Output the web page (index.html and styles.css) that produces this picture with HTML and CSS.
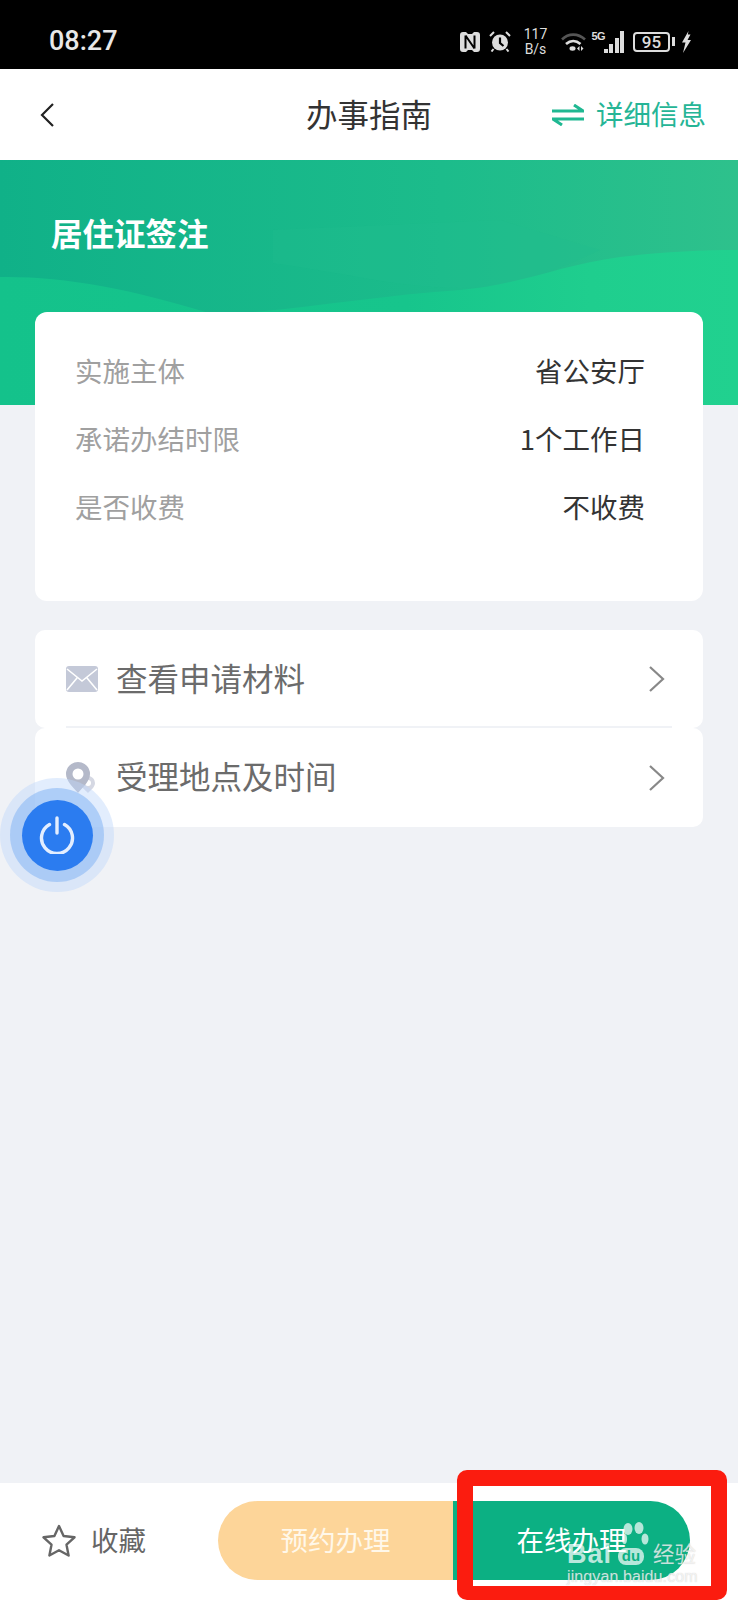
FILE: index.html
```html
<!DOCTYPE html>
<html lang="zh-CN">
<head>
  <meta charset="UTF-8" />
  <meta name="viewport" content="width=device-width, initial-scale=1.0"/>
  <title>办事指南</title>
  <link rel="stylesheet" href="styles.css">
</head>
<body>
  <div class="page">
    <div class="status-bar">
      <span class="time">08:27</span>
      <div class="status-icons">
        <svg class="ic-nfc" width="20" height="20" viewBox="0 0 20 20">
          <path d="M3 0h3l2 2h4l2-2h3a3 3 0 0 1 3 3v14a3 3 0 0 1-3 3h-3l-2-2H8l-2 2H3a3 3 0 0 1-3-3V3a3 3 0 0 1 3-3z" fill="#ddd"/>
          <path d="M5.500 3.500v13M5.500 3.500l9 13M14.500 3.500v13" fill="none" stroke="#000" stroke-width="2"/>
        </svg>
        <svg class="ic-alarm" width="22" height="21" viewBox="0 0 22 21">
          <circle cx="11" cy="11.500" r="8" fill="#ddd"/>
          <path d="M11 6.500v5.500l3.500 3" fill="none" stroke="#000" stroke-width="2.200"/>
          <path d="M1 5l4-4M21 5l-4-4M4.500 18l-2 2.500M17.500 18l2 2.500" fill="none" stroke="#ddd" stroke-width="2"/>
        </svg>
        <div class="net-speed"><span>117</span><span>B/s</span></div>
        <svg class="ic-wifi" width="25" height="20" viewBox="0 0 25 20">
          <path d="M1 7.500C7.500 1 17 1 24 7.500" fill="none" stroke="#555" stroke-width="2.600"/>
          <path d="M5 12c4.500-4 10-4 14.500 0" fill="none" stroke="#ddd" stroke-width="2.600"/>
          <ellipse cx="11.500" cy="16.500" rx="3" ry="2.200" fill="#ddd"/>
          <path d="M18.500 14v5l-2.500-2.500zM20 14v5l2.500-2.500z" fill="#ddd"/>
        </svg>
        <span class="net-type">5G</span>
        <div class="signal"><i class="s1"></i><i class="s2"></i><i class="s3"></i><i class="s4"></i></div>
        <div class="battery"><span>95</span></div>
        <i class="battery-nub"></i>
        <svg class="ic-bolt" width="11" height="22" viewBox="0 0 11 22">
          <path d="M7.500 0L1 11.500h3.500L2 22l8-13H6.500l3-5.500H6.800z" fill="#ddd"/>
        </svg>
      </div>
    </div>

    <div class="nav-bar">
      <svg class="nav-back" width="14" height="24" viewBox="0 0 14 24">
        <path d="M13 1L2 12l11 11" fill="none" stroke="#222" stroke-width="2.200"/>
      </svg>
      <h1 class="nav-title">办事指南</h1>
      <div class="nav-action">
        <svg width="32" height="22" viewBox="0 0 32 22">
          <path d="M0 7h31L22 1M32 15H1l9 6" fill="none" stroke="#1fb892" stroke-width="3"/>
        </svg>
        <span>详细信息</span>
      </div>
    </div>

    <div class="content">
      <div class="hero">
        <svg class="hero-wave" width="738" height="245" viewBox="0 0 738 245">
          <defs>
            <linearGradient id="waveFill" x1="0" y1="0" x2="1" y2="0">
              <stop offset="0" stop-color="#14c28b"/>
              <stop offset="0.55" stop-color="#17c58c"/>
              <stop offset="0.8" stop-color="#1fce8e"/>
              <stop offset="1" stop-color="#21d18f"/>
            </linearGradient>
          </defs>
          <path d="M273 103C340 112 400 128 460 128C520 128 560 108 600 90L500 60L273 70Z" fill="#22bd8d" opacity="0.3"/>
          <path d="M0 117C60 116 130 128 215 155C300 150 380 135 460 130C520 125 560 105 620 97C660 92 700 90 738 90V245H0Z" fill="url(#waveFill)"/>
        </svg>
        <h2 class="hero-title">居住证签注</h2>
      </div>

      <div class="info-card">
        <div class="info-row"><span class="info-label">实施主体</span><span class="info-value">省公安厅</span></div>
        <div class="info-row"><span class="info-label">承诺办结时限</span><span class="info-value">1个工作日</span></div>
        <div class="info-row"><span class="info-label">是否收费</span><span class="info-value">不收费</span></div>
      </div>

      <div class="menu-card">
        <div class="menu-item menu-item-first">
          <svg class="menu-icon" width="32" height="26" viewBox="0 0 32 26">
            <rect width="32" height="26" rx="3" fill="#c4c9d8"/>
            <path d="M1 3l15 12L31 3M1 24l10-12M31 24L21 12" fill="none" stroke="#fff" stroke-width="1.600"/>
          </svg>
          <span class="menu-text">查看申请材料</span>
          <svg class="menu-arrow" width="17" height="26" viewBox="0 0 17 26">
            <path d="M2 1l13 12L2 25" fill="none" stroke="#888" stroke-width="2.200"/>
          </svg>
        </div>
      </div>
      <div class="menu-card">
        <div class="menu-item menu-item-last">
          <svg class="menu-icon" width="32" height="31" viewBox="0 0 32 31">
            <path d="M22 14a7 7 0 0 1 7 7c0 4-4 7-7 10-3-3-7-6-7-10a7 7 0 0 1 7-7z" fill="#d5d8e3"/>
            <circle cx="22" cy="21" r="3" fill="#fff"/>
            <path d="M12 0a12 12 0 0 1 12 12c0 7-7 13-12 19C7 25 0 19 0 12A12 12 0 0 1 12 0z" fill="#b4b9c9"/>
            <circle cx="12" cy="12" r="5.500" fill="#fff"/>
          </svg>
          <span class="menu-text">受理地点及时间</span>
          <svg class="menu-arrow" width="17" height="26" viewBox="0 0 17 26">
            <path d="M2 1l13 12L2 25" fill="none" stroke="#888" stroke-width="2.200"/>
          </svg>
        </div>
      </div>
    </div>

    <div class="bottom-bar">
      <div class="favorite">
        <svg width="34" height="33" viewBox="0 0 34 33">
          <path d="M17 2l4.600 10 10.900 1.300-8 7.400 2.100 10.800L17 26.200 7.400 31.500l2.100-10.800-8-7.400L12.400 12z" fill="none" stroke="#666" stroke-width="2.400" stroke-linejoin="round"/>
        </svg>
        <span>收藏</span>
      </div>
      <div class="action-pill">
        <div class="btn-reserve">预约办理</div>
        <div class="btn-online">在线办理</div>
      </div>
    </div>

    <!-- 悬浮按钮 -->
    <div class="float-btn">
      <div class="float-mid">
        <div class="float-core">
          <svg width="38" height="38" viewBox="0 0 38 38">
            <path d="M11.500 8.500a15.500 15.500 0 1 0 15 0" fill="none" stroke="#e3eeff" stroke-width="3.400" stroke-linecap="round"/>
            <path d="M19 2v15" fill="none" stroke="#e3eeff" stroke-width="3.400" stroke-linecap="round"/>
          </svg>
        </div>
      </div>
    </div>

    <!-- 标注框 + 水印 -->
    <div class="red-box"></div>
    <div class="watermark">
      <svg class="wm-paw" width="30" height="28" viewBox="0 0 30 28">
        <ellipse cx="6" cy="7" rx="4.500" ry="6" fill="#fff"/>
        <ellipse cx="17" cy="6" rx="4.500" ry="6" fill="#fff"/>
        <ellipse cx="2.500" cy="17" rx="2.500" ry="5" fill="#fff"/>
        <ellipse cx="23" cy="17" rx="3.500" ry="5.500" fill="#fff"/>
      </svg>
      <div class="wm-brand"><span class="wm-bai">Bai</span><span class="wm-du">du</span><span class="wm-cn">经验</span></div>
      <div class="wm-url">jingyan.baidu.com</div>
    </div>
  </div>
</body>
</html>
```

FILE: styles.css
```css
* {
    box-sizing: border-box;
}
body {
    margin: 0;
    font-family: "Noto Sans CJK SC", "Noto Sans", sans-serif;
    background-color: #f0f2f6;
}
.page {
    position: relative;
    width: 738px;
    height: 1600px;
    overflow: hidden;
    display: flex;
    flex-direction: column;
}

/* status bar */
.status-bar {
    height: 69px;
    background-color: #000;
    color: #ddd;
    display: flex;
    align-items: center;
    justify-content: space-between;
    padding: 14px 46px 0 49px;
    flex-shrink: 0;
}
.time {
    font-family: Roboto, sans-serif;
    font-size: 27px;
    font-weight: 500;
    color: #e8e8e8;
    transform: translateY(-1px);
}
.status-icons {
    display: flex;
    align-items: center;
}
.ic-alarm {
    margin-left: 9px;
}
.net-speed {
    margin-left: 13px;
    width: 24px;
    display: flex;
    flex-direction: column;
    align-items: center;
    font-family: Roboto, sans-serif;
    font-size: 14px;
    line-height: 15px;
}
.ic-wifi {
    margin-left: 13px;
}
.net-type {
    margin: -12px 0 0 6px;
    width: 12px;
    font-family: "Liberation Sans", sans-serif;
    font-size: 11px;
    font-weight: bold;
    line-height: 10px;
    letter-spacing: -0.5px;
}
.signal {
    display: flex;
    align-items: flex-end;
    gap: 1.500px;
    height: 22px;
}
.signal i {
    display: block;
    width: 4px;
    background-color: #ddd;
}
.signal .s1 { height: 4px; }
.signal .s2 { height: 9px; }
.signal .s3 { height: 15px; }
.signal .s4 { height: 22px; }
.battery {
    margin-left: 9px;
    width: 37px;
    height: 20px;
    border: 2px solid #ddd;
    border-radius: 4px;
    display: flex;
    align-items: center;
    justify-content: center;
    font-family: Roboto, sans-serif;
    font-size: 17px;
    font-weight: 500;
}
.battery-nub {
    display: block;
    margin-left: 2px;
    width: 3px;
    height: 9px;
    background-color: #ddd;
}
.ic-bolt {
    margin-left: 6px;
}

/* nav */
.nav-bar {
    position: relative;
    height: 91px;
    background-color: #fff;
    display: flex;
    align-items: center;
    justify-content: space-between;
    padding: 0 32px 0 40px;
    flex-shrink: 0;
}
.nav-title {
    position: absolute;
    left: 306px;
    margin: 0 0 4px;
    font-size: 31.500px;
    font-weight: 400;
    color: #333;
}
.nav-action {
    display: flex;
    align-items: center;
    gap: 12px;
    font-size: 27.500px;
    color: #25b596;
}
.nav-action span {
    margin-bottom: 3px;
}

/* hero + cards */
.content {
    flex: 1;
}
.hero {
    position: relative;
    height: 245px;
    background: linear-gradient(90deg, #10b188 0%, #1cbc8b 60%, #2ec18c 100%);
    overflow: hidden;
}
.hero-wave {
    position: absolute;
    left: 0;
    top: 0;
}
.hero-title {
    position: relative;
    margin: 0;
    padding: 49px 0 0 51px;
    font-size: 31.500px;
    line-height: 46px;
    font-weight: 700;
    color: #fff;
}
.info-card {
    position: relative;
    margin: -93px 35px 0 35px;
    height: 289px;
    padding: 23.500px 58px 0 40px;
    background-color: #fff;
    border-radius: 12px;
}
.info-row {
    height: 68px;
    display: flex;
    align-items: center;
    justify-content: space-between;
    font-size: 27.500px;
}
.info-label {
    color: #a0a0a0;
}
.info-value {
    color: #333;
}
.menu-card {
    margin: 0 35px;
    background-color: #fff;
    border-radius: 10px;
}
.info-card + .menu-card {
    margin-top: 29px;
}
.menu-item {
    height: 98px;
    display: flex;
    align-items: center;
    padding: 0 38px 0 31px;
}
.menu-item-last {
    height: 99px;
}
.menu-icon {
    flex-shrink: 0;
}
.menu-text {
    flex: 1;
    margin: 0 0 5px 18px;
    font-size: 31.500px;
    color: #6b6b6b;
}
.menu-item-first {
    background: linear-gradient(#f0f2f6, #f0f2f6) no-repeat 31px 96px / 606px 2px;
}
.menu-arrow {
    flex-shrink: 0;
}

/* bottom */
.bottom-bar {
    height: 117px;
    background-color: #fff;
    display: flex;
    align-items: center;
    padding: 0 48px 3px 42px;
    flex-shrink: 0;
    justify-content: space-between;
}
.favorite {
    display: flex;
    align-items: center;
    gap: 15px;
    font-size: 27.500px;
    color: #666;
}
.favorite span {
    margin-bottom: 2px;
}
.action-pill {
    display: flex;
    width: 472px;
    height: 79px;
    font-size: 27.500px;
    color: #fff;
    text-align: center;
    line-height: 77px;
}
.btn-reserve {
    width: 235px;
    background-color: #fdd599;
    color: #fff8ea;
    border-radius: 40px 0 0 40px;
}
.btn-online {
    flex: 1;
    background-color: #0cb083;
    border-radius: 0 40px 40px 0;
}

/* overlays */
.float-btn {
    position: absolute;
    left: 0;
    top: 778px;
    width: 114px;
    height: 114px;
    border-radius: 50%;
    background-color: rgba(190, 215, 250, 0.45);
    display: flex;
    align-items: center;
    justify-content: center;
}
.float-mid {
    width: 94px;
    height: 94px;
    border-radius: 50%;
    background-color: rgba(140, 185, 245, 0.6);
    display: flex;
    align-items: center;
    justify-content: center;
}
.float-core {
    width: 71px;
    height: 71px;
    border-radius: 50%;
    background-color: #2b7cf0;
    display: flex;
    align-items: center;
    justify-content: center;
}
.red-box {
    position: absolute;
    left: 457px;
    top: 1470px;
    width: 270px;
    height: 130px;
    border: 16px solid #fb1c0f;
    border-bottom-width: 14px;
    border-radius: 10px;
}
.watermark {
    position: absolute;
    left: 566px;
    top: 1522px;
    width: 134px;
    height: 62px;
    color: rgba(255, 255, 255, 0.72);
    font-family: "Liberation Sans", sans-serif;
}
.wm-paw {
    position: absolute;
    left: 56px;
    top: 0;
    opacity: 0.7;
}
.wm-brand {
    position: absolute;
    left: 1px;
    top: 18px;
    display: flex;
    align-items: flex-end;
    font-size: 27px;
    font-weight: 700;
    line-height: 28px;
    white-space: nowrap;
}
.wm-bai {
    letter-spacing: 1px;
}
.wm-du {
    margin: 0 0 3px 6px;
    width: 26px;
    height: 17px;
    background-color: rgba(255, 255, 255, 0.7);
    color: #0cb083;
    border-radius: 8px;
    text-align: center;
    font-size: 15px;
    line-height: 16px;
}
.wm-cn {
    position: absolute;
    left: 86px;
    top: 0;
    font-family: "Noto Sans CJK SC", sans-serif;
    font-size: 21.500px;
    font-weight: 400;
    line-height: 26px;
    text-shadow: 0 0 1px rgba(120, 120, 120, 0.4);
}
.wm-url {
    position: absolute;
    left: 1px;
    top: 47px;
    font-size: 16px;
    line-height: 16px;
    letter-spacing: 0.1px;
    white-space: nowrap;
    text-shadow: 0 0 1px rgba(150, 150, 150, 0.5);
}
```
